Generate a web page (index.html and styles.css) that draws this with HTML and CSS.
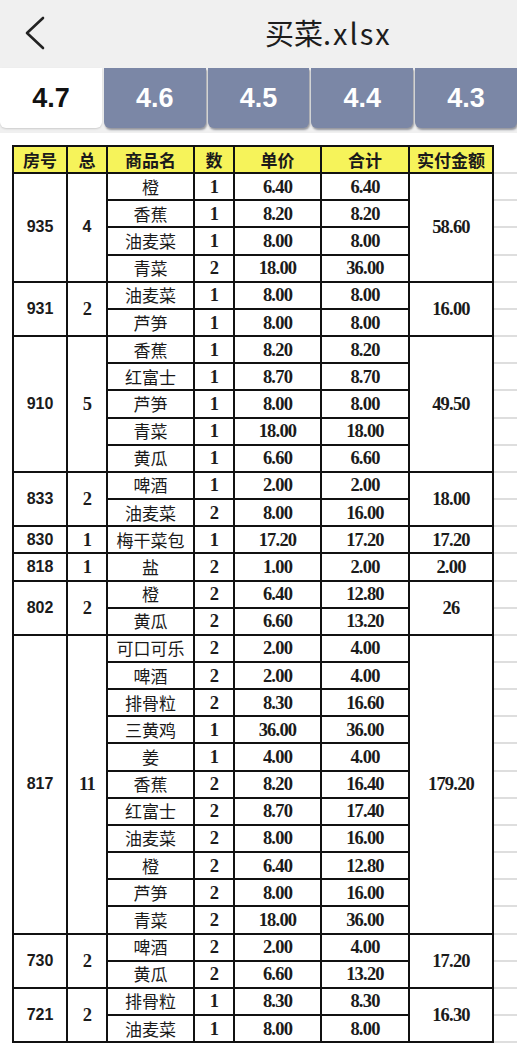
FILE: index.html
```html
<!DOCTYPE html>
<html lang="zh">
<head>
<meta charset="utf-8">
<title>买菜.xlsx</title>
<link rel="stylesheet" href="styles.css">
</head>
<body>
<header class="topbar">
  <span class="back"><svg width="22" height="34" viewBox="0 0 22 34"><polyline points="19,2 3,17 19,32" fill="none" stroke="#222" stroke-width="2.6" stroke-linecap="round" stroke-linejoin="round"/></svg></span>
  <h1 class="title">买菜<span class="ext">.xlsx</span></h1>
</header>
<nav class="tabs">
  <div class="tab active">4.7</div>
  <div class="tab">4.6</div>
  <div class="tab">4.5</div>
  <div class="tab">4.4</div>
  <div class="tab">4.3</div>
</nav>
<main class="sheet">
<table class="grid">
  <colgroup>
    <col class="c-room"><col class="c-total"><col class="c-name"><col class="c-qty"><col class="c-price"><col class="c-sum"><col class="c-pay"><col class="c-pad">
  </colgroup>
  <thead>
    <tr><th>房号</th><th>总</th><th>商品名</th><th>数</th><th>单价</th><th>合计</th><th>实付金额</th><td class="pad"></td></tr>
  </thead>
  <tbody>
    <tr><td class="room" rowspan="4">935</td><td class="cnt sans" rowspan="4">4</td><td class="name">橙</td><td class="num">1</td><td class="num">6.40</td><td class="num">6.40</td><td class="num" rowspan="4">58.60</td><td class="pad"></td></tr>
    <tr><td class="name">香蕉</td><td class="num">1</td><td class="num">8.20</td><td class="num">8.20</td><td class="pad"></td></tr>
    <tr><td class="name">油麦菜</td><td class="num">1</td><td class="num">8.00</td><td class="num">8.00</td><td class="pad"></td></tr>
    <tr><td class="name">青菜</td><td class="num">2</td><td class="num">18.00</td><td class="num">36.00</td><td class="pad"></td></tr>

    <tr><td class="room" rowspan="2">931</td><td class="cnt" rowspan="2">2</td><td class="name">油麦菜</td><td class="num">1</td><td class="num">8.00</td><td class="num">8.00</td><td class="num" rowspan="2">16.00</td><td class="pad"></td></tr>
    <tr><td class="name">芦笋</td><td class="num">1</td><td class="num">8.00</td><td class="num">8.00</td><td class="pad"></td></tr>

    <tr><td class="room" rowspan="5">910</td><td class="cnt" rowspan="5">5</td><td class="name">香蕉</td><td class="num">1</td><td class="num">8.20</td><td class="num">8.20</td><td class="num" rowspan="5">49.50</td><td class="pad"></td></tr>
    <tr><td class="name">红富士</td><td class="num">1</td><td class="num">8.70</td><td class="num">8.70</td><td class="pad"></td></tr>
    <tr><td class="name">芦笋</td><td class="num">1</td><td class="num">8.00</td><td class="num">8.00</td><td class="pad"></td></tr>
    <tr><td class="name">青菜</td><td class="num">1</td><td class="num">18.00</td><td class="num">18.00</td><td class="pad"></td></tr>
    <tr><td class="name">黄瓜</td><td class="num">1</td><td class="num">6.60</td><td class="num">6.60</td><td class="pad"></td></tr>

    <tr><td class="room" rowspan="2">833</td><td class="cnt" rowspan="2">2</td><td class="name">啤酒</td><td class="num">1</td><td class="num">2.00</td><td class="num">2.00</td><td class="num" rowspan="2">18.00</td><td class="pad"></td></tr>
    <tr><td class="name">油麦菜</td><td class="num">2</td><td class="num">8.00</td><td class="num">16.00</td><td class="pad"></td></tr>

    <tr><td class="room">830</td><td class="cnt">1</td><td class="name">梅干菜包</td><td class="num">1</td><td class="num">17.20</td><td class="num">17.20</td><td class="num">17.20</td><td class="pad"></td></tr>

    <tr><td class="room">818</td><td class="cnt">1</td><td class="name">盐</td><td class="num">2</td><td class="num">1.00</td><td class="num">2.00</td><td class="num">2.00</td><td class="pad"></td></tr>

    <tr><td class="room" rowspan="2">802</td><td class="cnt" rowspan="2">2</td><td class="name">橙</td><td class="num">2</td><td class="num">6.40</td><td class="num">12.80</td><td class="num" rowspan="2">26</td><td class="pad"></td></tr>
    <tr><td class="name">黄瓜</td><td class="num">2</td><td class="num">6.60</td><td class="num">13.20</td><td class="pad"></td></tr>

    <tr><td class="room" rowspan="11">817</td><td class="cnt" rowspan="11">11</td><td class="name">可口可乐</td><td class="num">2</td><td class="num">2.00</td><td class="num">4.00</td><td class="num" rowspan="11">179.20</td><td class="pad"></td></tr>
    <tr><td class="name">啤酒</td><td class="num">2</td><td class="num">2.00</td><td class="num">4.00</td><td class="pad"></td></tr>
    <tr><td class="name">排骨粒</td><td class="num">2</td><td class="num">8.30</td><td class="num">16.60</td><td class="pad"></td></tr>
    <tr><td class="name">三黄鸡</td><td class="num">1</td><td class="num">36.00</td><td class="num">36.00</td><td class="pad"></td></tr>
    <tr><td class="name">姜</td><td class="num">1</td><td class="num">4.00</td><td class="num">4.00</td><td class="pad"></td></tr>
    <tr><td class="name">香蕉</td><td class="num">2</td><td class="num">8.20</td><td class="num">16.40</td><td class="pad"></td></tr>
    <tr><td class="name">红富士</td><td class="num">2</td><td class="num">8.70</td><td class="num">17.40</td><td class="pad"></td></tr>
    <tr><td class="name">油麦菜</td><td class="num">2</td><td class="num">8.00</td><td class="num">16.00</td><td class="pad"></td></tr>
    <tr><td class="name">橙</td><td class="num">2</td><td class="num">6.40</td><td class="num">12.80</td><td class="pad"></td></tr>
    <tr><td class="name">芦笋</td><td class="num">2</td><td class="num">8.00</td><td class="num">16.00</td><td class="pad"></td></tr>
    <tr><td class="name">青菜</td><td class="num">2</td><td class="num">18.00</td><td class="num">36.00</td><td class="pad"></td></tr>

    <tr><td class="room" rowspan="2">730</td><td class="cnt" rowspan="2">2</td><td class="name">啤酒</td><td class="num">2</td><td class="num">2.00</td><td class="num">4.00</td><td class="num" rowspan="2">17.20</td><td class="pad"></td></tr>
    <tr><td class="name">黄瓜</td><td class="num">2</td><td class="num">6.60</td><td class="num">13.20</td><td class="pad"></td></tr>

    <tr><td class="room" rowspan="2">721</td><td class="cnt" rowspan="2">2</td><td class="name">排骨粒</td><td class="num">1</td><td class="num">8.30</td><td class="num">8.30</td><td class="num" rowspan="2">16.30</td><td class="pad"></td></tr>
    <tr><td class="name">油麦菜</td><td class="num">1</td><td class="num">8.00</td><td class="num">8.00</td><td class="pad"></td></tr>
  </tbody>
</table>
</main>
</body>
</html>
```
FILE: styles.css
```css
html, body {
  margin: 0;
  padding: 0;
  background: #ffffff;
  overflow: hidden;
}
body {
  font-family: "Noto Sans CJK SC", "Noto Sans", sans-serif;
  color: #1b1b1b;
}
.topbar {
  height: 68px;
  background: #f0f0f0;
  display: flex;
  align-items: center;
}
.back {
  width: 265px;
  box-sizing: border-box;
  padding-left: 24px;
  display: flex;
  align-items: center;
  margin-top: -2px;
}
.title {
  margin: 0;
  font-size: 29px;
  font-weight: 400;
  color: #1d1d1d;
  margin-top: -4px;
}
.title .ext {
  letter-spacing: 2px;
}
.tabs {
  display: flex;
  gap: 2px;
  background: #f0f0f0;
  height: 60px;
  padding-bottom: 5px;
}
.tab {
  flex: 1;
  display: flex;
  align-items: center;
  justify-content: center;
  background: #7b87a6;
  color: #ffffff;
  font-family: "Liberation Sans", Arial, sans-serif;
  font-weight: 700;
  font-size: 27px;
  border-radius: 0 0 6px 6px;
  box-shadow: 1px 2px 2px rgba(40, 45, 60, 0.45);
}
.tab.active {
  background: #ffffff;
  color: #111111;
  box-shadow: 0 1px 2px rgba(0, 0, 0, 0.15);
}
.sheet {
  padding-top: 12px;
}
.grid {
  border-collapse: collapse;
  table-layout: fixed;
  margin-left: 12px;
  width: 505px;
}
.c-room { width: 54px; }
.c-total { width: 40px; }
.c-name { width: 87px; }
.c-qty { width: 40px; }
.c-price { width: 87px; }
.c-sum { width: 88px; }
.c-pay { width: 84px; }
.c-pad { width: 25px; }
.grid tr {
  height: 27.16px;
}
.grid th, .grid td {
  border: 2px solid #111;
  padding: 0;
  text-align: center;
  vertical-align: middle;
  line-height: 20px;
  white-space: nowrap;
  overflow: hidden;
}
.grid th {
  background: #f6f35a;
  font-weight: 700;
  font-size: 17px;
  color: #1a1a1a;
}
.grid td.pad {
  border-top: none;
  border-right: none;
  border-bottom: 2px solid #dedede;
  background: #fff;
}
.name {
  font-size: 17px;
  color: #1a1a1a;
}
.room, .sans {
  font-family: "Liberation Sans", Arial, sans-serif;
  font-weight: 700;
  font-size: 16px;
}
.num, .cnt {
  font-family: "Liberation Serif", "Times New Roman", serif;
  font-weight: 700;
  font-size: 18.5px;
  letter-spacing: -0.8px;
}
.cnt.sans {
  font-family: "Liberation Sans", Arial, sans-serif;
  font-size: 16px;
  letter-spacing: 0;
}
```
